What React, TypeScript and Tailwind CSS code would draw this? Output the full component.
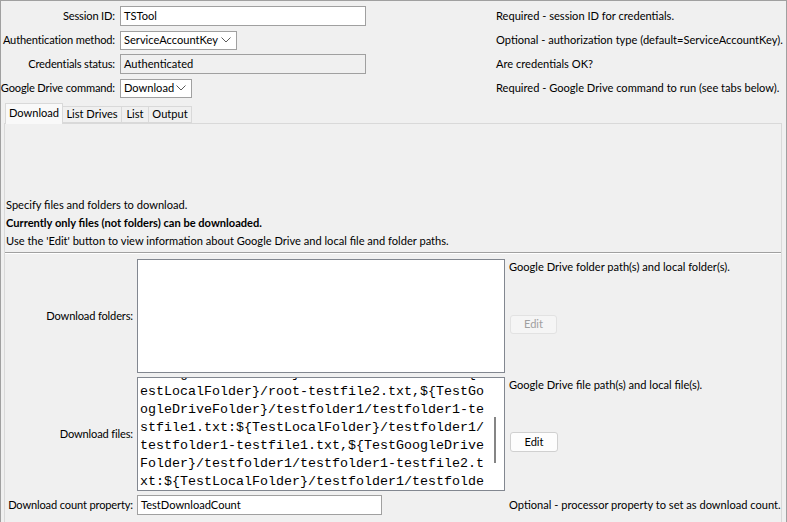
import React from 'react';

const fileLines = [
  'stGoogleDriveFolder}/root-testfile2.txt:${T',
  'estLocalFolder}/root-testfile2.txt,${TestGo',
  'ogleDriveFolder}/testfolder1/testfolder1-te',
  'stfile1.txt:${TestLocalFolder}/testfolder1/',
  'testfolder1-testfile1.txt,${TestGoogleDrive',
  'Folder}/testfolder1/testfolder1-testfile2.t',
  'xt:${TestLocalFolder}/testfolder1/testfolde',
];

function Chevron() {
  return (
    <svg width="10" height="6" viewBox="0 0 10 6" className="shrink-0">
      <polyline points="0.5,0.5 5,5 9.5,0.5" fill="none" stroke="#5a5a5a" strokeWidth="1" />
    </svg>
  );
}

function Label({ children }: { children: React.ReactNode }) {
  return (
    <div className="flex justify-end pr-[5px] whitespace-nowrap leading-[20px] tracking-[-0.15px]">{children}</div>
  );
}

function PanelLabel({ children }: { children: React.ReactNode }) {
  return (
    <div className="self-center flex justify-end pr-[4px] whitespace-nowrap tracking-[-0.15px]">{children}</div>
  );
}

export default function App() {
  return (
    <div className="w-[787px] h-[522px] overflow-hidden bg-[#f0f0f0] border-t border-l border-r border-[#a0a0a0] text-[11.1px] text-black font-['Lato',sans-serif]">
      {/* Top form */}
      <div className="mt-[5px] grid grid-cols-[119px_376px_1fr] gap-y-[4px] items-center">
        <Label>Session ID:</Label>
        <div className="w-[246px] h-[20px] bg-white border border-[#a0a0a0] px-[3px] flex items-center">TSTool</div>
        <div className="whitespace-nowrap">Required - session ID for credentials.</div>

        <Label>Authentication method:</Label>
        <div className="w-[117px] h-[19px] bg-white border border-[#a0a0a0] pl-[3px] pr-[5px] flex items-center justify-between">
          <span>ServiceAccountKey</span>
          <Chevron />
        </div>
        <div className="whitespace-nowrap">Optional - authorization type (default=ServiceAccountKey).</div>

        <Label>Credentials status:</Label>
        <div className="w-[246px] h-[20px] bg-[#f0f0f0] border border-[#a0a0a0] px-[3px] flex items-center">Authenticated</div>
        <div className="whitespace-nowrap">Are credentials OK?</div>

        <Label>Google Drive command:</Label>
        <div className="w-[72px] h-[19px] bg-white border border-[#a0a0a0] pl-[3px] pr-[5px] flex items-center justify-between">
          <span>Download</span>
          <Chevron />
        </div>
        <div className="whitespace-nowrap">Required - Google Drive command to run (see tabs below).</div>
      </div>

      {/* Tabs */}
      <div className="mt-[5px] pl-[4px] flex items-end relative z-10">
        <div className="w-[58px] h-[21px] bg-[#f9f9f9] border border-b-0 border-[#d9d9d9] flex items-center justify-center -mb-px pb-[2px]">
          Download
        </div>
        <div className="w-[59px] h-[17px] border border-l-0 border-[#d9d9d9] flex items-center justify-center">List Drives</div>
        <div className="w-[27px] h-[17px] border border-l-0 border-[#d9d9d9] flex items-center justify-center">List</div>
        <div className="w-[43px] h-[17px] border border-l-0 border-[#d9d9d9] flex items-center justify-center">Output</div>
      </div>

      {/* Tab panel */}
      <div className="ml-[3px] w-[778px] h-[420px] border border-[#d9d9d9] bg-[#f0f0f0] pt-[72px]">
        <div className="pl-[1px] leading-[18px]">
          <div>Specify files and folders to download.</div>
          <div className="font-bold">Currently only files (not folders) can be downloaded.</div>
          <div>Use the 'Edit' button to view information about Google Drive and local file and folder paths.</div>
        </div>
        <div className="mt-[2px] h-px bg-[#a0a0a0] border-b border-white box-content" />

        <div className="mt-[5px] grid grid-cols-[132px_372px_1fr] gap-y-[4px]">
          {/* Download folders */}
          <PanelLabel>Download folders:</PanelLabel>
          <div className="w-[368px] h-[114px] bg-white border border-[#828790]" />
          <div className="flex flex-col items-start">
            <div className="leading-[16px] whitespace-nowrap">Google Drive folder path(s) and local folder(s).</div>
            <div className="mt-[40px] ml-[1px] w-[47px] h-[19px] bg-[#f5f5f5] border border-[#e2e2e2] rounded-[3px] flex items-center justify-center text-[#a0a0a0]">
              Edit
            </div>
          </div>

          {/* Download files */}
          <PanelLabel>Download files:</PanelLabel>
          <div className="relative w-[368px] h-[114px] bg-white border border-[#828790] overflow-hidden">
            <div className="-mt-[13px] pl-[2px] font-['Liberation_Mono',monospace] text-[13.33px] leading-[18px] whitespace-pre">
              {fileLines.map((line, i) => (
                <div key={i}>{line}</div>
              ))}
            </div>
            <div className="absolute right-[8px] top-[39px] w-[2px] h-[46px] bg-[#858585]" />
          </div>
          <div className="flex flex-col items-start">
            <div className="leading-[16px] whitespace-nowrap">Google Drive file path(s) and local file(s).</div>
            <div className="mt-[39px] ml-[1px] w-[48px] h-[20px] bg-[#fdfdfd] border border-[#d0d0d0] rounded-[3px] flex items-center justify-center">
              Edit
            </div>
          </div>

          {/* Download count property */}
          <PanelLabel>Download count property:</PanelLabel>
          <div className="w-[245px] h-[20px] bg-white border border-[#a0a0a0] px-[3px] flex items-center">TestDownloadCount</div>
          <div className="self-center whitespace-nowrap">Optional - processor property to set as download count.</div>
        </div>
      </div>
    </div>
  );
}
